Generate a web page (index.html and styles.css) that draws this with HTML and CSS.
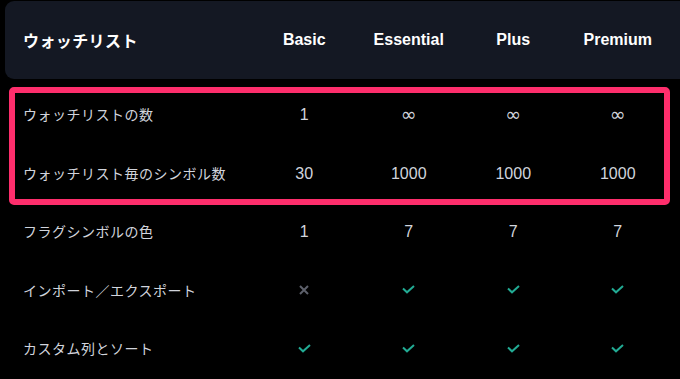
FILE: index.html
```html
<!DOCTYPE html>
<html lang="ja">
<head>
<meta charset="utf-8">
<link rel="stylesheet" href="styles.css">
</head>
<body>
<div class="page">
  <div class="head-card">
    <div class="row head-row">
      <div class="label">ウォッチリスト</div>
      <div class="cell">Basic</div>
      <div class="cell">Essential</div>
      <div class="cell">Plus</div>
      <div class="cell">Premium</div>
    </div>
  </div>
  <div class="rows">
    <div class="highlight">
      <div class="row">
        <div class="label">ウォッチリストの数</div>
        <div class="cell num">1</div>
        <div class="cell inf">∞</div>
        <div class="cell inf">∞</div>
        <div class="cell inf">∞</div>
      </div>
      <div class="row">
        <div class="label">ウォッチリスト毎のシンボル数</div>
        <div class="cell num">30</div>
        <div class="cell num">1000</div>
        <div class="cell num">1000</div>
        <div class="cell num">1000</div>
      </div>
    </div>
    <div class="row">
      <div class="label">フラグシンボルの色</div>
      <div class="cell num">1</div>
      <div class="cell num">7</div>
      <div class="cell num">7</div>
      <div class="cell num">7</div>
    </div>
    <div class="row">
      <div class="label">インポート／エクスポート</div>
      <div class="cell"><svg class="icon-x" width="10" height="10" viewBox="0 0 10 10"><path d="M1 1L9 9M9 1L1 9"/></svg></div>
      <div class="cell"><svg class="icon-check" width="13" height="9" viewBox="0 0 13 9"><path d="M1 3.5L5 7.3L12 1"/></svg></div>
      <div class="cell"><svg class="icon-check" width="13" height="9" viewBox="0 0 13 9"><path d="M1 3.5L5 7.3L12 1"/></svg></div>
      <div class="cell"><svg class="icon-check" width="13" height="9" viewBox="0 0 13 9"><path d="M1 3.5L5 7.3L12 1"/></svg></div>
    </div>
    <div class="row">
      <div class="label">カスタム列とソート</div>
      <div class="cell"><svg class="icon-check" width="13" height="9" viewBox="0 0 13 9"><path d="M1 3.5L5 7.3L12 1"/></svg></div>
      <div class="cell"><svg class="icon-check" width="13" height="9" viewBox="0 0 13 9"><path d="M1 3.5L5 7.3L12 1"/></svg></div>
      <div class="cell"><svg class="icon-check" width="13" height="9" viewBox="0 0 13 9"><path d="M1 3.5L5 7.3L12 1"/></svg></div>
      <div class="cell"><svg class="icon-check" width="13" height="9" viewBox="0 0 13 9"><path d="M1 3.5L5 7.3L12 1"/></svg></div>
    </div>
  </div>
</div>
</body>
</html>
```

FILE: styles.css
```css
html, body {
  margin: 0;
  padding: 0;
  background: #000;
  overflow: hidden;
}
body {
  width: 680px;
  height: 379px;
  font-family: "Liberation Sans", "Noto Sans CJK JP", sans-serif;
  color: #d1d4dc;
}
.page {
  padding-top: 1px;
}
.head-card {
  margin-left: 5px;
  margin-right: -20px;
  height: 78px;
  background: #141823;
  border-radius: 9px;
  display: flex;
  align-items: center;
}
.row {
  display: grid;
  grid-template-columns: 229px repeat(4, 104.5px);
  align-items: center;
  height: 58.5px;
  padding-left: 23px;
}
.head-row {
  width: 100%;
  padding-left: 18px;
  height: auto;
  color: #fff;
  font-weight: bold;
  font-size: 16px;
}
.rows {
  margin-top: 6px;
}
.label {
  font-size: 14px;
  letter-spacing: 0.5px;
  white-space: nowrap;
}
.head-row .label {
  font-size: 16px;
  letter-spacing: 0.4px;
}
.cell {
  text-align: center;
  font-size: 16px;
  display: flex;
  justify-content: center;
  align-items: center;
}
.num {
  padding-top: 2px;
}
.head-row .cell {
  font-size: 16px;
}
.inf {
  font-family: "DejaVu Sans", sans-serif;
  font-size: 19px;
}
.highlight {
  position: relative;
}
.highlight::after {
  content: "";
  position: absolute;
  left: 9px;
  top: 2px;
  width: 649px;
  height: 106px;
  border: 6px solid #fe2e6c;
  border-radius: 5px;
  pointer-events: none;
}
.icon-check path {
  fill: none;
  stroke: #22ab94;
  stroke-width: 2;
}
.icon-x path {
  fill: none;
  stroke: #5d606b;
  stroke-width: 2;
}
```
